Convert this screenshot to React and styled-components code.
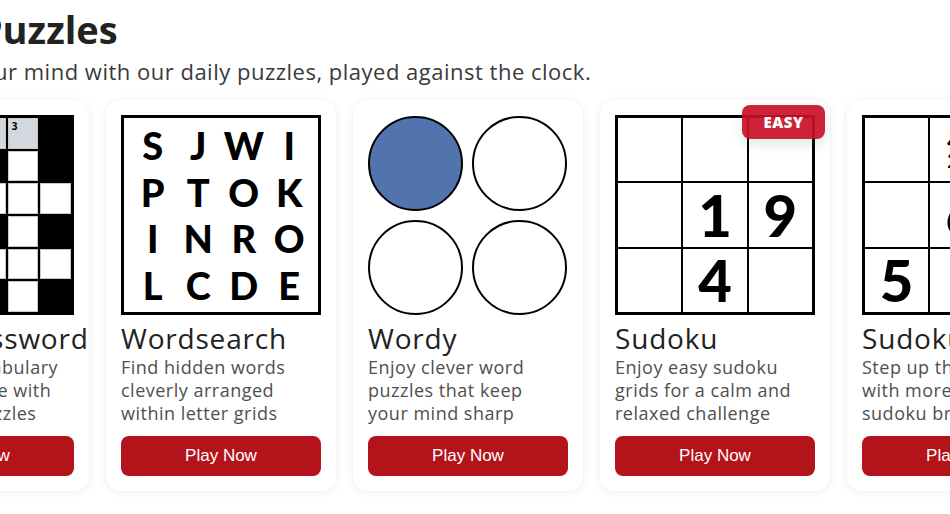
import React from "react";
import styled, { createGlobalStyle } from "styled-components";

const GlobalStyle = createGlobalStyle`
  html, body { margin: 0; padding: 0; background: #ffffff; }
  body { font-family: "Open Sans", "Noto Sans", sans-serif; color: #222; }
  * { box-sizing: border-box; }
`;

const Page = styled.div`
  width: 950px;
  height: 514px;
  overflow: hidden;
  background: #fff;
`;

const Header = styled.header`
  margin-left: -127px;
  padding-top: 4px;
`;

const Heading = styled.h1`
  margin: 0;
  font-size: 38px;
  line-height: 50px;
  font-weight: 700;
  color: #222;
  white-space: nowrap;
`;

const Subtitle = styled.p`
  margin: 3px 0 0;
  font-size: 22px;
  line-height: 28px;
  letter-spacing: 0.5px;
  color: #3a3a3a;
  white-space: nowrap;
`;

const CardRow = styled.div`
  display: flex;
  gap: 17px;
  margin-top: 15px;
  margin-left: -141px;
`;

const Card = styled.article`
  position: relative;
  flex: 0 0 230px;
  width: 230px;
  min-width: 0;
  padding: 15px;
  background: #fff;
  border-radius: 14px;
  box-shadow: 0 1px 10px rgba(0, 0, 0, 0.07), 0 0 2px rgba(0, 0, 0, 0.04);
  display: flex;
  flex-direction: column;
`;

const Badge = styled.span`
  position: absolute;
  top: 5px;
  right: 5px;
  width: 83px;
  height: 34px;
  display: flex;
  align-items: center;
  justify-content: center;
  background: rgba(200, 16, 40, 0.92);
  color: #fff;
  font-weight: 800;
  font-size: 15px;
  letter-spacing: 0.6px;
  border-radius: 8px;
  box-shadow: 0 6px 12px rgba(40, 110, 90, 0.14);
`;

const Art = styled.div`
  width: 200px;
  height: 200px;
  flex-shrink: 0;
`;

const CrossGrid = styled(Art)`
  display: grid;
  grid-template-columns: repeat(6, 1fr);
  grid-template-rows: repeat(6, 1fr);
  gap: 2px;
  padding: 3px;
  background: #000;
`;

const CrossCell = styled.div`
  position: relative;
  background: ${(p) => (p.$kind === "B" ? "#000" : p.$kind === "G" ? "#d3d7de" : "#fff")};
  border: ${(p) => (p.$kind === "B" ? "none" : "1px solid #c9c9c9")};
`;

const CellNum = styled.span`
  position: absolute;
  top: 1px;
  left: 3px;
  font-family: "Open Sans", sans-serif;
  font-size: 10px;
  line-height: 12px;
  font-weight: 700;
  color: #000;
`;

const LetterGrid = styled(Art)`
  display: grid;
  grid-template-columns: repeat(4, 1fr);
  grid-template-rows: repeat(4, 1fr);
  border: 3px solid #000;
  padding: 4px 6px;
`;

const Letter = styled.span`
  display: flex;
  align-items: center;
  justify-content: center;
  font-family: Lato, sans-serif;
  font-weight: 900;
  font-size: 38px;
  color: #000;
`;

const CircleGrid = styled(Art)`
  display: grid;
  grid-template-columns: repeat(2, 95px);
  grid-template-rows: repeat(2, 95px);
  gap: 9px;
  align-content: center;
`;

const Circle = styled.div`
  border-radius: 50%;
  border: 2px solid #000;
  background: ${(p) => (p.$filled ? "#5274ae" : "#fff")};
`;

const SudokuGrid = styled(Art)`
  display: grid;
  grid-template-columns: repeat(3, 1fr);
  grid-template-rows: repeat(3, 1fr);
  gap: 2px;
  background: #000;
  border: 3px solid #000;
`;

const SudokuCell = styled.div`
  background: #fff;
  display: flex;
  align-items: center;
  justify-content: center;
  font-family: Lato, sans-serif;
  font-weight: 900;
  font-size: ${(p) => (p.$small ? "21px" : "58px")};
  line-height: ${(p) => (p.$small ? "19px" : "1")};
  text-align: center;
  white-space: pre;
  color: #000;
`;

const CardTitle = styled.h2`
  margin: 6px 0 0;
  font-size: 28px;
  line-height: 34px;
  letter-spacing: 0.8px;
  font-weight: 400;
  color: #222;
  white-space: nowrap;
`;

const CardText = styled.p`
  margin: 1px 0 0;
  font-size: 18px;
  line-height: 23px;
  letter-spacing: 0.5px;
  color: #4f4f4f;
  white-space: nowrap;
`;

const Line = styled.span`
  display: block;
`;

const PlayButton = styled.button`
  margin-top: 11px;
  height: 40px;
  width: 100%;
  border: none;
  border-radius: 8px;
  background: #b3131b;
  color: #fff;
  font-family: "Liberation Sans", Arial, sans-serif;
  font-size: 17px;
  cursor: pointer;
`;

const crossword = [
  ["G1", "G", "G2", "G", "G3", "B"],
  ["W", "B", "W", "B", "W", "B"],
  ["W4", "W", "W", "W", "W", "W"],
  ["W", "B", "W", "B", "W", "B"],
  ["W5", "W", "W", "W", "W", "W"],
  ["W", "B", "W", "B", "W", "B"],
];

function Crossword() {
  return (
    <CrossGrid>
      {crossword.flat().map((c, i) => (
        <CrossCell key={i} $kind={c[0]}>
          {c.length > 1 && <CellNum>{c.slice(1)}</CellNum>}
        </CrossCell>
      ))}
    </CrossGrid>
  );
}

function Wordsearch() {
  const letters = "SJWIPTOKINROLCDE".split("");
  return (
    <LetterGrid>
      {letters.map((l, i) => (
        <Letter key={i}>{l}</Letter>
      ))}
    </LetterGrid>
  );
}

function Wordy() {
  return (
    <CircleGrid>
      <Circle $filled />
      <Circle />
      <Circle />
      <Circle />
    </CircleGrid>
  );
}

function Sudoku({ cells }) {
  return (
    <SudokuGrid>
      {cells.map((v, i) => (
        <SudokuCell key={i} $small={v.includes("\n")}>
          {v}
        </SudokuCell>
      ))}
    </SudokuGrid>
  );
}

const cards = [
  {
    art: <Crossword />,
    title: "Mini Crossword",
    lines: ["Test your vocabulary", "and knowledge with", "crossword puzzles"],
  },
  {
    art: <Wordsearch />,
    title: "Wordsearch",
    lines: ["Find hidden words", "cleverly arranged", "within letter grids"],
  },
  {
    art: <Wordy />,
    title: "Wordy",
    lines: ["Enjoy clever word", "puzzles that keep", "your mind sharp"],
  },
  {
    art: <Sudoku cells={["", "", "", "", "1", "9", "", "4", ""]} />,
    title: "Sudoku",
    lines: ["Enjoy easy sudoku", "grids for a calm and", "relaxed challenge"],
    badge: "EASY",
  },
  {
    art: <Sudoku cells={["", "4 8\n2 6", "", "", "6", "", "5", "", ""]} />,
    title: "Sudoku Medium",
    lines: ["Step up the challenge", "with more demanding", "sudoku brainteasers"],
    badge: "MEDIUM",
  },
];

export default function App() {
  return (
    <Page>
      <GlobalStyle />
      <Header>
        <Heading>Daily Puzzles</Heading>
        <Subtitle>Sharpen your mind with our daily puzzles, played against the clock.</Subtitle>
      </Header>
      <CardRow>
        {cards.map((c) => (
          <Card key={c.title}>
            {c.badge && <Badge>{c.badge}</Badge>}
            {c.art}
            <CardTitle>{c.title}</CardTitle>
            <CardText>
              {c.lines.map((l) => (
                <Line key={l}>{l}</Line>
              ))}
            </CardText>
            <PlayButton>Play Now</PlayButton>
          </Card>
        ))}
      </CardRow>
    </Page>
  );
}
